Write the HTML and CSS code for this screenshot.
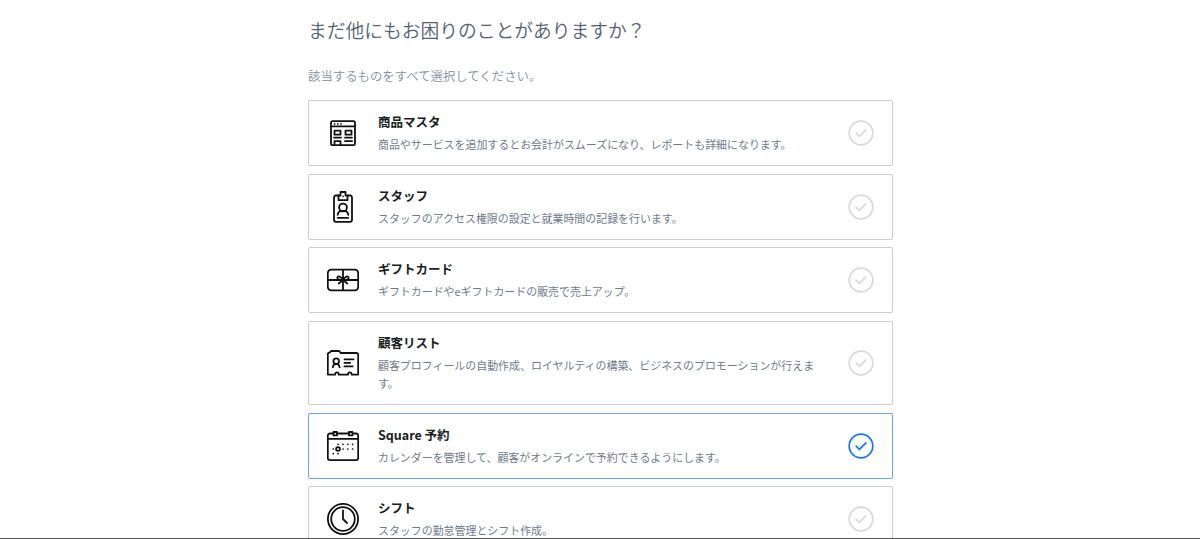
FILE: index.html
```html
<!DOCTYPE html>
<html lang="ja">
<head>
    <meta charset="utf-8">
    <title>Square</title>
    <link rel="stylesheet" href="styles.css">
</head>
<body>
    <svg class="sprite">
        <symbol id="check" viewBox="0 0 26 26">
            <circle cx="13" cy="13" r="11.8"/>
            <path d="M8.2 13.1l3.2 3.2 6.5-6.5"/>
        </symbol>
    </svg>
    <div id="container">
        <h1>まだ他にもお困りのことがありますか？</h1>
        <p class="hint">該当するものをすべて選択してください。</p>
        <div class="options">
            <div class="option">
                <svg class="icon" viewBox="0 0 32 32">
                    <rect x="4" y="4.2" width="24" height="24" rx="1.5"/>
                    <path d="M4 9.3h24M7.5 13.7h6v4h-6zM18.5 13.7h6v4h-6zM7 20.6h7M18 20.6h7M18 24.2h7M7.5 28v-3.9h6V28"/>
                    <path class="dots" d="M7.6 6.9h.01M10.8 6.9h.01M14 6.9h.01"/>
                </svg>
                <div class="text">
                    <h2>商品マスタ</h2>
                    <p>商品やサービスを追加するとお会計がスムーズになり、レポートも詳細になります。</p>
                </div>
                <svg class="check"><use href="#check"/></svg>
            </div>
            <div class="option">
                <svg class="icon" viewBox="0 0 32 32">
                    <path d="M11.5 4.5H9a2 2 0 0 0-2 2v22.3a2 2 0 0 0 2 2h14a2 2 0 0 0 2-2V6.5a2 2 0 0 0-2-2h-2.5"/>
                    <path d="M11.5 9.2V4.5h2V1h5v3.5h2v4.7z"/>
                    <circle cx="16" cy="16.5" r="3.9"/>
                    <path d="M10.7 23.8c.3-2.5 1.4-3.7 3.3-4h4c1.9.3 3 1.5 3.3 4M10.7 26.8h10.6"/>
                    <path class="dots" d="M16 5.3h.01"/>
                </svg>
                <div class="text">
                    <h2>スタッフ</h2>
                    <p>スタッフのアクセス権限の設定と就業時間の記録を行います。</p>
                </div>
                <svg class="check"><use href="#check"/></svg>
            </div>
            <div class="option">
                <svg class="icon" viewBox="0 0 32 32">
                    <rect x=".8" y="5.7" width="30.4" height="20.6" rx="3.5"/>
                    <path d="M1 16h30M16 6v20M16 16c-2-3.8-5.2-4.6-5.7-2.5-.4 2 2.7 2.7 5.7 2.5 3 .2 6.1-.5 5.7-2.5-.5-2.1-3.7-1.3-5.7 2.5M16 16l-4.3 3.5M16 16l4.3 3.5"/>
                </svg>
                <div class="text">
                    <h2>ギフトカード</h2>
                    <p>ギフトカードやeギフトカードの販売で売上アップ。</p>
                </div>
                <svg class="check"><use href="#check"/></svg>
            </div>
            <div class="option">
                <svg class="icon" viewBox="0 0 32 32">
                    <path d="M.8 27.6V6.5l2-1.2L4.3 4h7.9l1.5 2h15.5a2 2 0 0 1 2 2v19.6h-6.5c-.2-3-3.5-3-3.7 0h-9.2c-.2-3-3.5-3-3.7 0z"/>
                    <circle cx="9.2" cy="14.2" r="2.8"/>
                    <path d="M5.8 20.3c.2-2 1-2.7 2.3-3.1h2.2c1.3.4 2.1 1.1 2.3 3.1M17.5 12.3h9M17.5 15.9h5.7M17.5 19.4h8.2"/>
                </svg>
                <div class="text">
                    <h2>顧客リスト</h2>
                    <p>顧客プロフィールの自動作成、ロイヤルティの構築、ビジネスのプロモーションが行えます。</p>
                </div>
                <svg class="check"><use href="#check"/></svg>
            </div>
            <div class="option selected">
                <svg class="icon" viewBox="0 0 32 32">
                    <path d="M6.3 3.5H3A2.2 2.2 0 0 0 .8 5.7v22.2a2.2 2.2 0 0 0 2.2 2.2h26a2.2 2.2 0 0 0 2.2-2.2V5.7A2.2 2.2 0 0 0 29 3.5h-3.300M10 3.500h12M1 8.800h30"/>
                    <path d="M6.500 2h3.500v3.400H6.500zM22 2h3.500v3.400H22z"/>
                    <circle cx="11" cy="19" r="1.9"/>
                    <path class="dots" d="M11 14.300h.01M16 14.300h.01M20.800 14.300h.01M25.600 14.300h.01M6.300 19h.01M16 19h.01M20.800 19h.01M25.600 19h.01M6.300 23.700h.01M11 23.700h.01"/>
                </svg>
                <div class="text">
                    <h2>Square 予約</h2>
                    <p>カレンダーを管理して、顧客がオンラインで予約できるようにします。</p>
                </div>
                <svg class="check"><use href="#check"/></svg>
            </div>
            <div class="option">
                <svg class="icon" viewBox="0 0 32 32">
                    <circle cx="16" cy="16" r="15.1"/>
                    <circle cx="16" cy="16" r="11.8"/>
                    <path d="M16 7.5V16l4 4"/>
                </svg>
                <div class="text">
                    <h2>シフト</h2>
                    <p>スタッフの勤怠管理とシフト作成。</p>
                </div>
                <svg class="check"><use href="#check"/></svg>
            </div>
        </div>
    </div>
</body>
</html>
```
FILE: styles.css
```css
* {
    box-sizing: border-box;
}

body {
    margin: 0;
    height: 539px;
    overflow: hidden;
    background-color: #fff;
    border-bottom: 1px solid #555;
    font-family: "Noto Sans CJK JP", sans-serif;
}

.sprite {
    display: none;
}

#container {
    margin: 0 307.4px 0 308px;
    padding-top: 16px;
}

h1 {
    margin: 0;
    font-size: 18.75px;
    line-height: 28px;
    font-weight: 350;
    color: #556172;
}

.hint {
    margin: 23px 0 14.4px;
    font-size: 12.4px;
    line-height: 19px;
    font-weight: 350;
    color: #85909f;
}

.options {
    display: flex;
    flex-direction: column;
    gap: 7.8px;
}

.option {
    display: flex;
    align-items: center;
    padding: 11px 17.5px 11.2px 18px;
    border: 1px solid #ccc;
    border-radius: 2px;
}

.option.selected {
    border-color: #66a6ff;
}

.icon {
    flex: none;
    width: 32px;
    height: 32px;
    margin-right: 19px;
    fill: none;
    stroke: #111;
    stroke-width: 1.8;
    stroke-linecap: round;
    stroke-linejoin: round;
}

.icon .dots {
    stroke-width: 1.7;
}

.text {
    flex: 1;
    margin-right: 26px;
}

h2 {
    margin: 0 0 3px;
    font-size: 12.5px;
    line-height: 20px;
    font-weight: 700;
    color: #1a1e22;
}

.text p {
    margin: 0;
    font-size: 10.95px;
    line-height: 18.5px;
    color: #6f7b8c;
}

.check {
    flex: none;
    width: 26px;
    height: 26px;
    fill: none;
    stroke: #d9d9d9;
    stroke-width: 1.7;
    stroke-linecap: round;
    stroke-linejoin: round;
}

.selected .check {
    stroke: #1774ff;
}
```
